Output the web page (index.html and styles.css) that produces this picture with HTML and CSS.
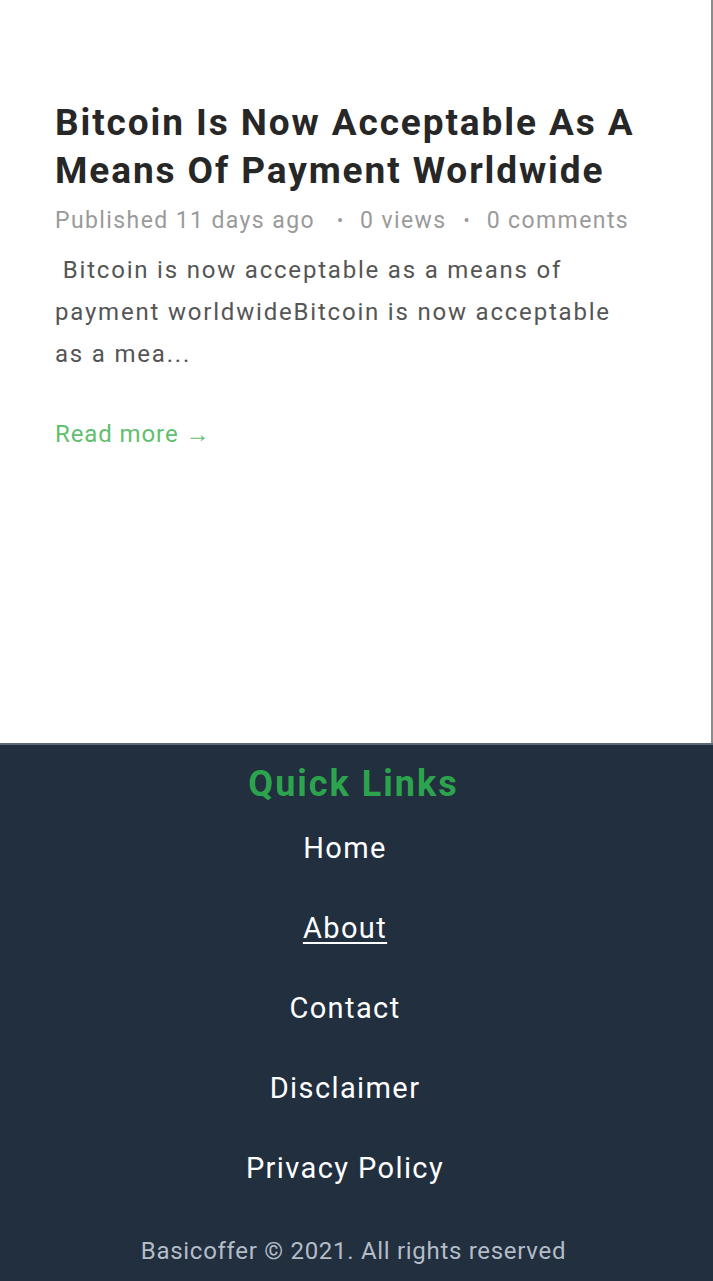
FILE: index.html
```html
<!DOCTYPE html>
<html lang="en">
<head>
<meta charset="utf-8">
<title>Bitcoin Is Now Acceptable As A Means Of Payment Worldwide</title>
<link rel="stylesheet" href="styles.css">
</head>
<body>
<main class="main">
  <article class="post">
    <h1 class="post-title">Bitcoin Is Now Acceptable As A Means Of Payment Worldwide</h1>
    <div class="post-meta">
      <span class="published">Published 11 days ago</span>
      <span class="dot">•</span>
      <span>0 views</span>
      <span class="dot">•</span>
      <span>0 comments</span>
    </div>
    <p class="post-excerpt">&nbsp;Bitcoin is now acceptable as a means of payment worldwideBitcoin is now acceptable as a mea...</p>
    <a class="read-more" href="#">Read more →</a>
  </article>
</main>
<footer class="footer">
  <h2 class="footer-title">Quick Links</h2>
  <ul class="footer-links">
    <li><a href="#">Home</a></li>
    <li><a href="#" class="active">About</a></li>
    <li><a href="#">Contact</a></li>
    <li><a href="#">Disclaimer</a></li>
    <li><a href="#">Privacy Policy</a></li>
  </ul>
  <p class="copyright">Basicoffer © 2021. All rights reserved</p>
</footer>
</body>
</html>
```
FILE: styles.css
```css
* { box-sizing: border-box; }
html, body {
  margin: 0;
  padding: 0;
  background: #ffffff;
  font-family: Roboto, "Noto Sans", Arial, sans-serif;
}
.main {
  height: 743px;
  border-right: 2px solid #8c8c8c;
  padding: 99px 72px 0 55px;
}
.post-title {
  margin: 0;
  font-size: 37px;
  line-height: 48px;
  font-weight: 700;
  letter-spacing: 1.9px;
  color: #272727;
}
.post-meta {
  margin-top: 10px;
  font-size: 23px;
  line-height: 32px;
  letter-spacing: 1.4px;
  color: #9a9a9a;
  display: flex;
  align-items: center;
  gap: 17px;
  white-space: nowrap;
}
.post-meta .published { margin-right: 5px; }
.post-meta .dot { font-size: 18px; letter-spacing: 0; }
.post-excerpt {
  margin: 12px 0 0 0;
  font-size: 24px;
  line-height: 42px;
  letter-spacing: 1.8px;
  color: #555555;
}
.read-more {
  display: inline-block;
  margin-top: 43px;
  font-size: 24px;
  line-height: 32px;
  letter-spacing: 0.9px;
  color: #5fbf6e;
  text-decoration: none;
}
.footer {
  background: #222f3f;
  border-top: 2px solid #5f6774;
  padding: 17px 6px 0 0;
  height: 538px;
  text-align: center;
}
.footer-title {
  margin: 0;
  font-size: 36px;
  line-height: 44px;
  font-weight: 700;
  letter-spacing: 2px;
  color: #2ca44d;
}
.footer-links {
  list-style: none;
  margin: 2px 0 0 0;
  padding: 0 17px 0 0;
}
.footer-links li {
  height: 80px;
  line-height: 80px;
}
.footer-links a {
  color: #ffffff;
  font-size: 29px;
  letter-spacing: 1.4px;
  text-decoration: none;
}
.footer-links a.active { text-decoration: underline; text-underline-offset: 4px; }
.copyright {
  margin: 27px 0 0 0;
  font-size: 24px;
  line-height: 32px;
  letter-spacing: 0.7px;
  color: #b3bcc7;
}
```
